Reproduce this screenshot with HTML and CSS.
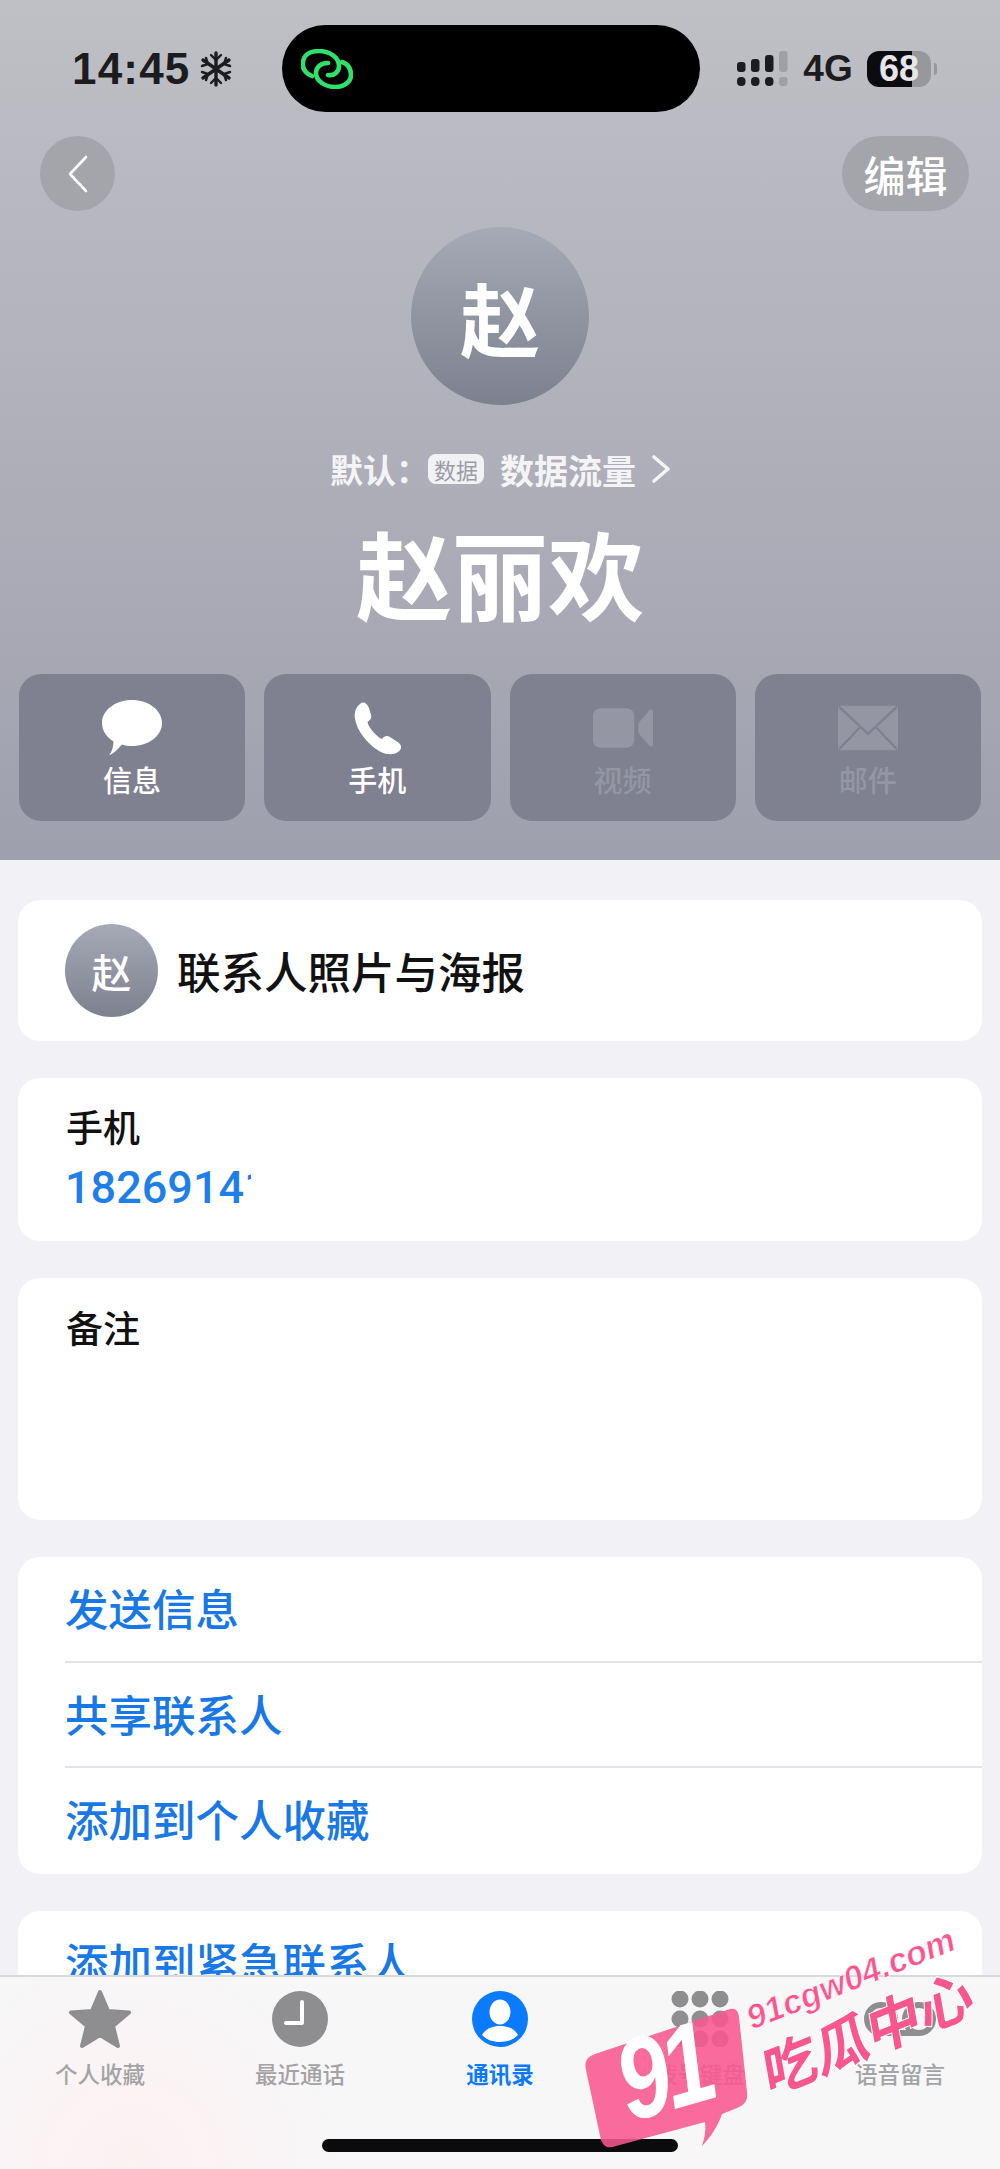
FILE: index.html
```html
<!DOCTYPE html>
<html lang="zh-CN">
<head>
    <meta charset="UTF-8">
    <title>赵丽欢</title>
    <link rel="stylesheet" href="styles.css">
</head>
<body>
<div class="phone">

    <!-- Cabecalho -->
    <header class="hero">
        <div class="status">
            <div class="status-left">
                <span class="time">14:45</span>
                <svg class="snow" viewBox="0 0 32 36" fill="none" stroke="#1c1c1e" stroke-width="3.4" stroke-linecap="round">
                    <path d="M16 2V34M3 9L29 27M29 9L3 27"/>
                    <path d="M11 4L16 9L21 4M11 32L16 27L21 32M2 15L8 13L6 7M30 15L24 13L26 7M2 21L8 23L6 29M30 21L24 23L26 29" stroke-width="2.4"/>
                </svg>
            </div>
            <div class="island">
                <svg class="link-icon" viewBox="0 0 52 40" fill="none" stroke="#2fe06a" stroke-width="4.600" stroke-linecap="round">
                    <path d="M11 27C4 24 1 19 2 13C3 5 10 2 18 2C28 2 38 8 38 17C38 23 33 27 27 26"/>
                    <path d="M41 13C47 15 50 20 50 26C50 33 43 38 34 38C24 38 15 32 15 24C15 18 20 14 27 14"/>
                </svg>
            </div>
            <div class="status-right">
                <svg class="signal" viewBox="0 0 52 36">
                    <g fill="#1c1c1e">
                        <rect x="0" y="11" width="8.500" height="10" rx="3"/>
                        <rect x="14" y="8" width="8.500" height="13" rx="3"/>
                        <rect x="28" y="4" width="8.500" height="17" rx="3"/>
                        <rect x="0" y="26" width="8.500" height="9" rx="4"/>
                        <rect x="14" y="26" width="8.500" height="9" rx="4"/>
                        <rect x="28" y="26" width="8.500" height="9" rx="4"/>
                    </g>
                    <g fill="#9fa0a5">
                        <rect x="42" y="0" width="8.500" height="21" rx="3"/>
                        <rect x="42" y="26" width="8.500" height="9" rx="3"/>
                    </g>
                </svg>
                <span class="net">4G</span>
                <div class="battery"><span class="battery-num">68</span></div>
                <span class="battery-tip"></span>
            </div>
        </div>

        <div class="nav">
            <button class="round-btn back">
                <svg width="22" height="38" viewBox="0 0 22 38" fill="none" stroke="#fff" stroke-width="2.6" stroke-linecap="round" stroke-linejoin="round">
                    <path d="M19 2L3 19L19 36"/>
                </svg>
            </button>
            <button class="round-btn edit">编辑</button>
        </div>

        <div class="avatar">赵</div>

        <div class="default-line">
            <span class="sim-default">默认：</span>
            <span class="sim-badge">数据</span>
            <span class="sim-name">数据流量</span>
            <svg width="20" height="30" viewBox="0 0 20 30" fill="none" stroke="#f4f4f6" stroke-width="3.6" stroke-linecap="round" stroke-linejoin="round">
                <path d="M3 3L17 15L3 27"/>
            </svg>
        </div>

        <h1 class="name">赵丽欢</h1>

        <div class="actions">
            <div class="action">
                <svg class="action-icon" viewBox="0 0 60 56" fill="#fff">
                    <path d="M30 0C46.500 0 60 10 60 23C60 36 46.500 46 30 46C26.500 46 23 45.500 20 44.500C17 48 12.500 53 8 55C7.500 55 7.500 54.500 8 54C10 51 11.500 46 11.500 41.500C4.500 37 0 30.500 0 23C0 10 13.500 0 30 0Z"/>
                </svg>
                <span>信息</span>
            </div>
            <div class="action">
                <svg class="action-icon" viewBox="0 0 60 56" fill="#fff">
                    <path d="M13 4C16 1 20 3 22 8L24 15C25 18 23 20 20.500 22C21 27 30 37 35 39C37 36 40 35 43 37L52 43C55 46 55 49 51 52C47 55 40 55 34 52C22 46 10 31 8 19C7 12 9 7 13 4Z"/>
                </svg>
                <span>手机</span>
            </div>
            <div class="action off">
                <svg class="action-icon" viewBox="0 0 64 44" fill="#9496a4">
                    <rect x="0" y="1" width="44" height="42" rx="8"/>
                    <path d="M49 16L60 3C62 1 64 2 64 5V39C64 42 62 43 60 41L49 28C48 26 48 18 49 16Z"/>
                </svg>
                <span>视频</span>
            </div>
            <div class="action off">
                <svg class="action-icon mail" viewBox="0 0 62 46">
                    <rect x="0" y="0" width="62" height="46" rx="2" fill="#9496a4"/>
                    <path d="M1 1L31 29L61 1M1 45L23 22M61 45L39 22" fill="none" stroke="#7f8190" stroke-width="2.4"/>
                </svg>
                <span>邮件</span>
            </div>
        </div>
    </header>

    <!-- Cartoes -->
    <main class="content">
        <section class="card poster-row">
            <div class="avatar-small">赵</div>
            <span class="poster-title">联系人照片与海报</span>
        </section>

        <section class="card phone-card">
            <div class="field-label">手机</div>
            <div class="phone-number">18269141</div>
        </section>

        <section class="card notes-card">
            <div class="field-label">备注</div>
        </section>

        <section class="card links-card">
            <div class="link-row">发送信息</div>
            <div class="link-row">共享联系人</div>
            <div class="link-row">添加到个人收藏</div>
        </section>

        <section class="card links-card">
            <div class="link-row">添加到紧急联系人</div>
        </section>
    </main>

    <!-- Barra inferior -->
    <nav class="tabbar">
        <div class="tab">
            <div class="tab-icon">
                <svg width="64" height="60" viewBox="0 0 64 60" fill="#8e8e90" stroke="#8e8e90" stroke-width="4" stroke-linejoin="round">
                    <path d="M32 3L40 22L61 23.500L45 37L50 57L32 46L14 57L19 37L3 23.500L24 22Z"/>
                </svg>
            </div>
            <span>个人收藏</span>
        </div>
        <div class="tab">
            <div class="tab-icon">
                <svg width="56" height="56" viewBox="0 0 56 56">
                    <circle cx="28" cy="28" r="28" fill="#8e8e90"/>
                    <path d="M30 11V32H14" fill="none" stroke="#fff" stroke-width="4" stroke-linecap="round" stroke-linejoin="round"/>
                </svg>
            </div>
            <span>最近通话</span>
        </div>
        <div class="tab active">
            <div class="tab-icon">
                <svg width="56" height="56" viewBox="0 0 56 56">
                    <circle cx="28" cy="28" r="28" fill="#0a7aff"/>
                    <ellipse cx="28" cy="21" rx="10.500" ry="12.500" fill="#fff"/>
                    <path d="M10 44C14 37 21 35 28 35C35 35 42 37 46 44C41 49 35 51 28 51C21 51 15 49 10 44Z" fill="#fff"/>
                </svg>
            </div>
            <span>通讯录</span>
        </div>
        <div class="tab">
            <div class="tab-icon">
                <svg width="58" height="56" viewBox="0 0 58 56" fill="#8e8e90">
                    <circle cx="9" cy="8" r="8.500"/><circle cx="29" cy="8" r="8.500"/><circle cx="49" cy="8" r="8.500"/>
                    <circle cx="9" cy="28" r="8.500"/><circle cx="29" cy="28" r="8.500"/><circle cx="49" cy="28" r="8.500"/>
                    <circle cx="9" cy="48" r="8.500"/><circle cx="29" cy="48" r="8.500"/><circle cx="49" cy="48" r="8.500"/>
                </svg>
            </div>
            <span>拨号键盘</span>
        </div>
        <div class="tab">
            <div class="tab-icon">
                <svg width="72" height="38" viewBox="0 0 72 38" fill="none" stroke="#8e8e90" stroke-width="6">
                    <circle cx="17" cy="19" r="14"/><circle cx="55" cy="19" r="14"/>
                    <path d="M17 33H55"/>
                </svg>
            </div>
            <span>语音留言</span>
        </div>
    </nav>
    <div class="home-bar"></div>

    <!-- Marca de agua por cima de tudo -->
    <svg class="watermark" viewBox="0 0 420 249">
        <path d="M6 150C4 142 7 137 15 134L147 90C155 87 158 90 159 97L167 172C168 180 165 185 157 188L142 194C138 206 130 218 122 226C125 217 126 210 125 202L36 226C28 229 24 227 21 220Z" fill="#f9568f" fill-opacity="0.88"/>
        <text class="wm-num" x="0" y="0" transform="translate(50 202) rotate(-16) scale(1 1.250)">91</text>
        <text class="wm-url" x="0" y="0" transform="translate(172 110) rotate(-21.500)">91cgw04.com</text>
        <text class="wm-cn" x="0" y="0" transform="translate(188 176) rotate(-22) skewX(-12)">吃瓜中心</text>
    </svg>
</div>
</body>
</html>
```

FILE: styles.css
```css
/* Estilos gerais */
* {
    box-sizing: border-box;
}

body {
    margin: 0;
    background-color: #f1f1f6;
    font-family: "Noto Sans CJK SC", "Liberation Sans", sans-serif;
}

.phone {
    position: relative;
    width: 1000px;
    height: 2169px;
    overflow: hidden;
    background-color: #f1f1f6;
}

/* Cabecalho */
.hero {
    height: 860px;
    background: linear-gradient(to bottom, #bfc0c5, #9fa0ae);
}

.status {
    display: flex;
    align-items: center;
    height: 112px;
    padding: 25px 0 0 72px;
}

.status-left {
    display: flex;
    align-items: center;
    gap: 9px;
    width: 210px;
}

.time {
    font-family: "Liberation Sans", sans-serif;
    font-size: 44px;
    font-weight: bold;
    letter-spacing: 1.200px;
    color: #1c1c1e;
}

.snow {
    width: 32px;
    height: 36px;
}

.island {
    display: flex;
    align-items: center;
    width: 418px;
    height: 87px;
    padding-left: 19px;
    border-radius: 44px;
    background-color: #000;
}

.link-icon {
    width: 52px;
    height: 40px;
}

.status-right {
    display: flex;
    align-items: center;
    margin-left: 37px;
}

.signal {
    width: 52px;
    height: 36px;
}

.net {
    width: 78px;
    text-align: center;
    font-family: "Liberation Sans", sans-serif;
    font-size: 37px;
    font-weight: bold;
    color: #1c1c1e;
}

.battery {
    width: 64px;
    height: 36px;
    border-radius: 12px;
    background: linear-gradient(to right, #0c0c0e 70%, #97989c 70%);
    text-align: center;
}

.battery-num {
    display: block;
    font-family: "Liberation Sans", sans-serif;
    font-size: 36px;
    font-weight: bold;
    line-height: 36px;
    color: #e6e6e8;
}

.battery-tip {
    width: 3px;
    height: 12px;
    margin-left: 3px;
    border-radius: 0 3px 3px 0;
    background-color: #97989c;
}

.nav {
    display: flex;
    justify-content: space-between;
    margin-top: 24px;
    padding: 0 31px 0 40px;
}

.round-btn {
    display: flex;
    align-items: center;
    justify-content: center;
    height: 75px;
    padding: 0;
    border: none;
    border-radius: 38px;
    background-color: #a4a5ab;
    color: #fff;
    font-family: inherit;
}

.back {
    width: 75px;
}

.edit {
    width: 127px;
    font-size: 42px;
    font-weight: 500;
}

.avatar {
    display: flex;
    align-items: center;
    justify-content: center;
    width: 178px;
    height: 178px;
    margin: 16px auto 0;
    border-radius: 50%;
    background: linear-gradient(to bottom, #a5aab6, #7d808e);
    color: #fff;
    font-size: 80px;
    font-weight: 700;
}

.default-line {
    display: flex;
    align-items: center;
    height: 36px;
    margin-top: 46px;
    padding-left: 330px;
    color: #f4f4f6;
    font-size: 34px;
    font-weight: 700;
}

.sim-default {
    font-family: "Noto Sans CJK TC", sans-serif;
    font-size: 33px;
}

.sim-badge {
    width: 56px;
    height: 30px;
    margin-left: -1px;
    border-radius: 8px;
    background-color: #f2f2f4;
    color: #9a9ca8;
    font-size: 22px;
    font-weight: 400;
    line-height: 30px;
    text-align: center;
}

.sim-name {
    margin: 0 15px 0 16px;
}

.name {
    height: 110px;
    margin: 30px 0 0;
    color: #fff;
    font-size: 96px;
    font-weight: 700;
    line-height: 110px;
    text-align: center;
}

.actions {
    display: grid;
    grid-template-columns: repeat(4, 1fr);
    gap: 19px;
    margin-top: 47px;
    padding: 0 19px;
}

.action {
    display: flex;
    flex-direction: column;
    align-items: center;
    height: 147px;
    padding-top: 26px;
    border-radius: 22px;
    background-color: #7f8190;
    color: #fff;
    font-size: 29px;
    font-weight: 500;
}

.action span {
    margin-top: 2px;
    line-height: 42px;
}

.action-icon {
    width: 60px;
    height: 56px;
}

.action.off {
    color: #9496a4;
}

.mail {
    padding: 5px 0;
}

/* Cartoes */
.content {
    padding: 40px 18px 0;
}

.card {
    margin-bottom: 37px;
    border-radius: 22px;
    background-color: #fff;
}

.poster-row {
    display: flex;
    align-items: center;
    gap: 19px;
    height: 141px;
    padding-left: 47px;
}

.avatar-small {
    display: flex;
    align-items: center;
    justify-content: center;
    width: 93px;
    height: 93px;
    border-radius: 50%;
    background: linear-gradient(to bottom, #a5aab6, #7d808e);
    color: #fff;
    font-size: 40px;
    font-weight: 500;
}

.poster-title {
    color: #111;
    font-size: 43.500px;
    font-weight: 500;
}

.phone-card {
    height: 163px;
    padding: 23px 0 0 48px;
}

.field-label {
    color: #111;
    font-size: 37px;
    font-weight: 500;
    line-height: 50px;
}

.phone-number {
    width: 186px;
    margin: 9px 0 0 -1px;
    overflow: hidden;
    color: #1f7fe8;
    font-family: Roboto, "Liberation Sans", sans-serif;
    font-size: 45px;
    font-weight: 500;
    line-height: 56px;
    white-space: nowrap;
}

.notes-card {
    height: 242px;
    padding: 24px 0 0 48px;
}

.links-card {
    padding-left: 47px;
}

.link-row {
    height: 105.500px;
    border-bottom: 2px solid #e4e4e8;
    color: #1778e6;
    font-size: 43.500px;
    font-weight: 500;
    line-height: 102px;
}

.link-row:last-child {
    border-bottom: none;
}

/* Barra inferior */
.tabbar {
    position: absolute;
    left: 0;
    bottom: 0;
    display: grid;
    grid-template-columns: repeat(5, 200px);
    width: 1000px;
    height: 194px;
    padding-top: 12px;
    border-top: 2px solid #d9d9dc;
    background: radial-gradient(circle at 130px 190px, #fdf1f2 0, #f7f7f8 220px);
}

.tab {
    display: flex;
    flex-direction: column;
    align-items: center;
    color: #a3a3a5;
    font-size: 22.500px;
    font-weight: 500;
}

.tab-icon {
    display: flex;
    align-items: center;
    justify-content: center;
    height: 60px;
}

.tab span {
    margin-top: 8px;
    line-height: 32px;
}

.tab.active {
    color: #0a7aff;
    font-weight: 700;
}

.home-bar {
    position: absolute;
    left: 322px;
    bottom: 17px;
    width: 356px;
    height: 13px;
    border-radius: 7px;
    background-color: #0b0b0d;
}

/* Marca de agua */
.watermark {
    position: absolute;
    left: 580px;
    top: 1920px;
    width: 420px;
    height: 249px;
}

.wm-num {
    fill: #fff;
    font-family: "Liberation Sans", sans-serif;
    font-size: 92px;
    font-weight: bold;
    font-style: italic;
    letter-spacing: -6px;
}

.wm-url {
    fill: #f9568f;
    font-family: "Liberation Sans", sans-serif;
    font-size: 34px;
    font-style: italic;
    font-weight: bold;
    stroke: #fff;
    stroke-width: 0.6px;
}

.wm-cn {
    fill: #f9568f;
    stroke: #fff;
    stroke-width: 2px;
    paint-order: stroke;
    font-family: "Noto Sans CJK SC", sans-serif;
    font-size: 56px;
    font-weight: 700;
}
```
